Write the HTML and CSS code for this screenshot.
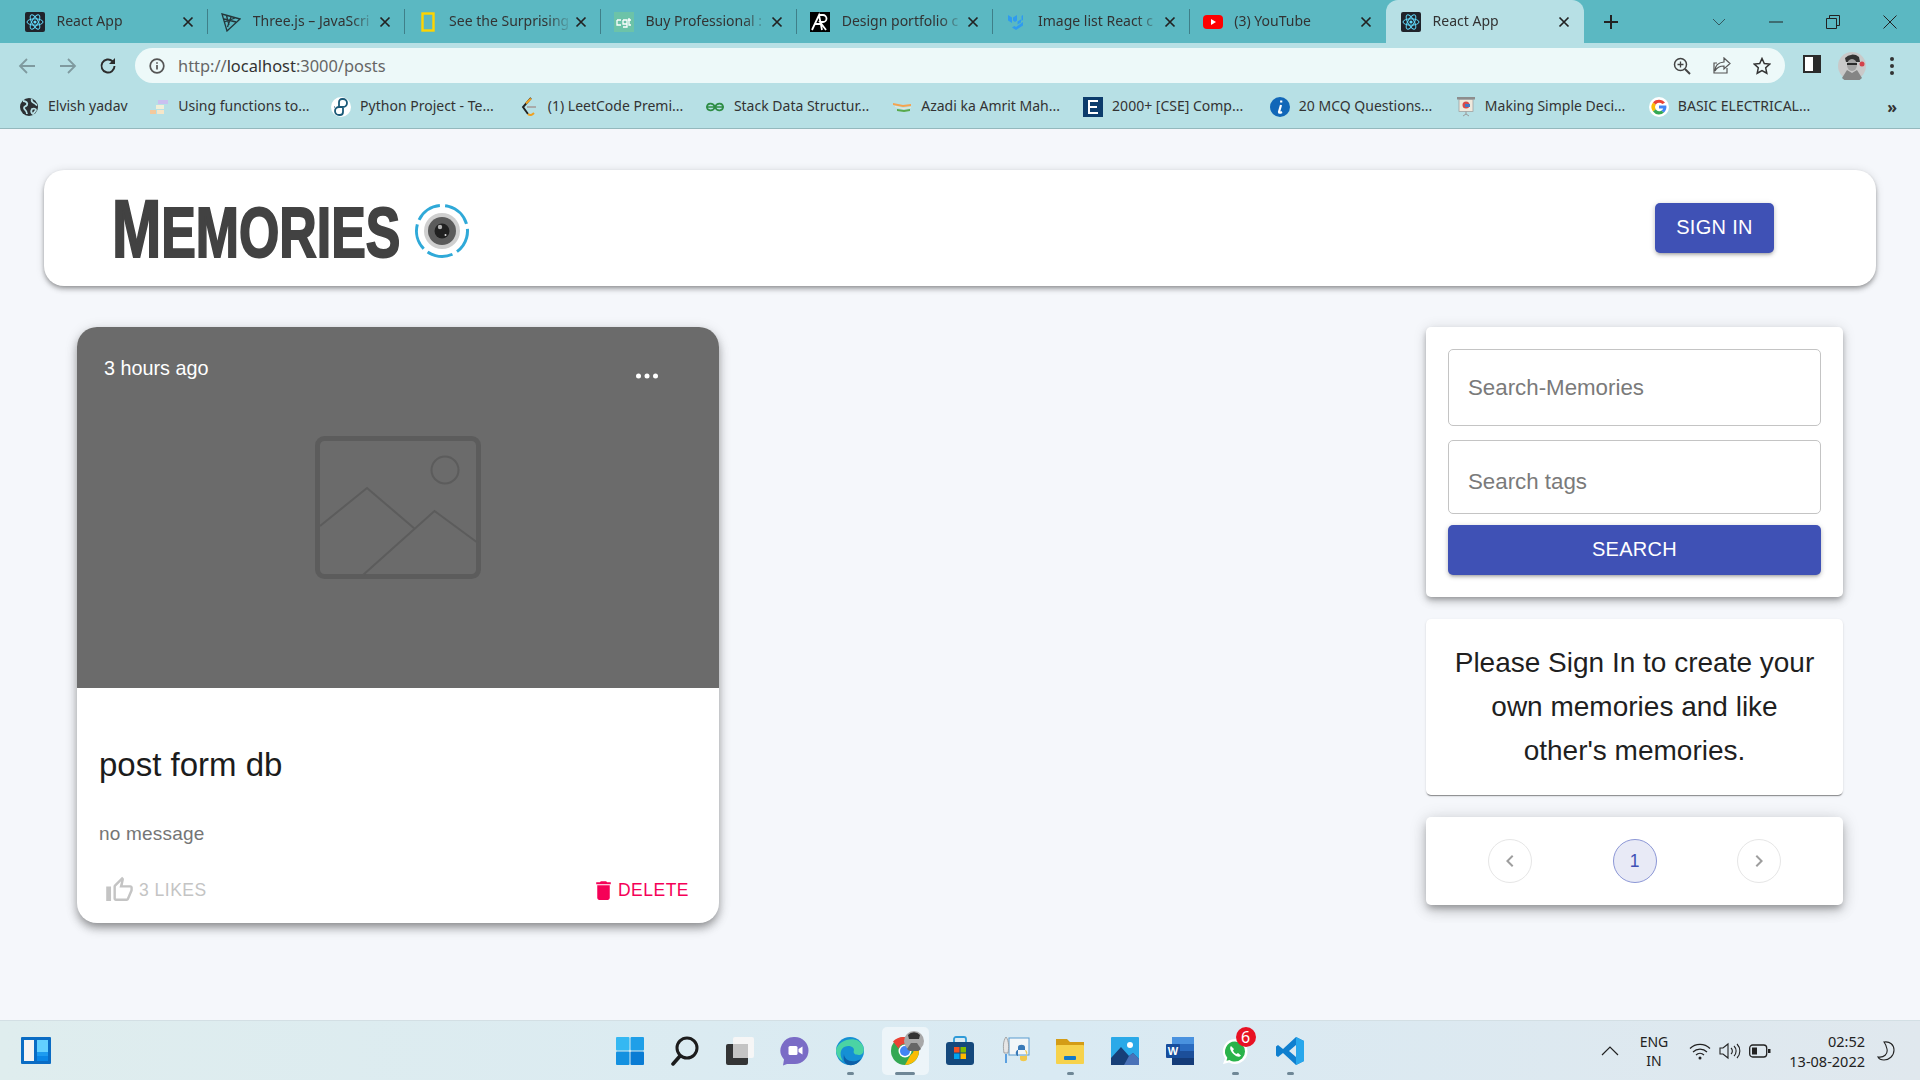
FILE: index.html
```html
<!DOCTYPE html>
<html lang="en">
<head>
    <meta charset="UTF-8">
    <title>React App</title>
    <link rel="stylesheet" href="styles.css">
</head>
<body>
    <svg class="defs" width="0" height="0">
        <symbol id="react" viewBox="0 0 20 20">
            <rect width="20" height="20" rx="2" fill="#20232a"/>
            <g fill="none" stroke="#61dafb" stroke-width="1">
                <ellipse cx="10" cy="10" rx="8" ry="3.2"/>
                <ellipse cx="10" cy="10" rx="8" ry="3.2" transform="rotate(60 10 10)"/>
                <ellipse cx="10" cy="10" rx="8" ry="3.2" transform="rotate(120 10 10)"/>
            </g>
            <circle cx="10" cy="10" r="1.6" fill="#61dafb"/>
        </symbol>
        <symbol id="close" viewBox="0 0 12 12">
            <path d="M1.5 1.5l9 9M10.5 1.5l-9 9" stroke="#222" stroke-width="1.7" fill="none"/>
        </symbol>
    </svg>

    <div class="tabstrip">
        <div class="tab">
            <svg class="favicon"><use href="#react"/></svg>
            <span class="tab-title">React App</span>
            <svg class="tab-close"><use href="#close"/></svg>
        </div>
        <div class="tab">
            <svg class="favicon" viewBox="0 0 20 20"><path d="M1 2l18 5L6 19z M5.500 3.500L8 13 M10 5L6.500 15 M14 6L3.500 10 M3 7l12 3" fill="none" stroke="#24363a" stroke-width="1.300"/></svg>
            <span class="tab-title">Three.js – JavaScri</span>
            <svg class="tab-close"><use href="#close"/></svg>
        </div>
        <div class="tab">
            <svg class="favicon" viewBox="0 0 20 20"><rect x="4.500" y="1.500" width="11" height="17" fill="none" stroke="#ffd400" stroke-width="2.400"/></svg>
            <span class="tab-title">See the Surprising</span>
            <svg class="tab-close"><use href="#close"/></svg>
        </div>
        <div class="tab">
            <svg class="favicon" viewBox="0 0 20 20"><rect width="20" height="20" fill="#6cc3a8"/><path d="M3 8h4M3 8v5h4M9 8h4v7h-4M9 8v4h4M15 6v7h2M14 8h3" fill="none" stroke="#fff" stroke-width="1.300"/></svg>
            <span class="tab-title">Buy Professional :</span>
            <svg class="tab-close"><use href="#close"/></svg>
        </div>
        <div class="tab">
            <svg class="favicon" viewBox="0 0 20 20"><rect width="20" height="20" fill="#000"/><path d="M2 18L9 3l3 15M5 12h6M9 3h4a3.500 3.500 0 0 1 0 7h-3l6 8" fill="none" stroke="#fff" stroke-width="1.800"/></svg>
            <span class="tab-title">Design portfolio c</span>
            <svg class="tab-close"><use href="#close"/></svg>
        </div>
        <div class="tab">
            <svg class="favicon" viewBox="0 0 20 20"><path d="M2 3l4 2.500V11L2 8.500zM7 5.500L11 3v5.500l-2 1.500L7 8.500zM11.500 9.500L15 7.500v3l-3.500 2zM17 3v5l-1.500 1V4zM17 10v3.500L10 18l-4-2.500 2.500-1.500 1.500 1z" fill="#2f9bf0"/></svg>
            <span class="tab-title">Image list React c</span>
            <svg class="tab-close"><use href="#close"/></svg>
        </div>
        <div class="tab tab-last">
            <svg class="favicon" viewBox="0 0 20 20"><rect y="3" width="20" height="14" rx="4" fill="#f00"/><path d="M8 7l5 3-5 3z" fill="#fff"/></svg>
            <span class="tab-title">(3) YouTube</span>
            <svg class="tab-close"><use href="#close"/></svg>
        </div>
        <div class="tab tab-active">
            <svg class="favicon"><use href="#react"/></svg>
            <span class="tab-title">React App</span>
            <svg class="tab-close"><use href="#close"/></svg>
        </div>
        <svg class="new-tab" viewBox="0 0 16 16"><path d="M8 1v14M1 8h14" stroke="#222" stroke-width="2"/></svg>
        <div class="window-controls">
            <span class="win-btn"><svg width="14" height="14" viewBox="0 0 14 14"><path d="M1 4l6 6 6-6" fill="none" stroke="#33595f" stroke-width="1"/></svg></span>
            <span class="win-btn"><svg width="14" height="14" viewBox="0 0 14 14"><path d="M0 7h14" stroke="#222" stroke-width="1"/></svg></span>
            <span class="win-btn"><svg width="14" height="14" viewBox="0 0 14 14"><path d="M.5 3.500h10v10H.5zM3.500 3.500v-3h10v10h-3" fill="none" stroke="#222" stroke-width="1"/></svg></span>
            <span class="win-btn"><svg width="14" height="14" viewBox="0 0 14 14"><path d="M.5.5l13 13M13.500.5l-13 13" stroke="#222" stroke-width="1"/></svg></span>
        </div>
    </div>

    <div class="toolbar">
        <span class="nav-btn"><svg width="18" height="18" viewBox="0 0 18 18"><path d="M17 9H2M9 2L2 9l7 7" fill="none" stroke="#7f9a9f" stroke-width="1.800"/></svg></span>
        <span class="nav-btn"><svg width="18" height="18" viewBox="0 0 18 18"><path d="M1 9h15M9 2l7 7-7 7" fill="none" stroke="#7f9a9f" stroke-width="1.800"/></svg></span>
        <span class="nav-btn"><svg width="18" height="18" viewBox="0 0 18 18"><path d="M15.500 9a6.500 6.500 0 1 1-2-4.700" fill="none" stroke="#2b2b2b" stroke-width="1.900"/><path d="M16 1v6h-6z" fill="#2b2b2b"/></svg></span>
        <div class="omnibox">
            <svg class="omni-info" width="16" height="16" viewBox="0 0 16 16"><circle cx="8" cy="8" r="6.800" fill="none" stroke="#555" stroke-width="1.700"/><path d="M8 7v4.500M8 4.200v1.600" stroke="#555" stroke-width="1.700"/></svg>
            <span class="omni-url">http://<span class="omni-host">localhost</span>:3000/posts</span>
            <svg class="omni-icon" viewBox="0 0 18 18"><circle cx="7.500" cy="7.500" r="6" fill="none" stroke="#444" stroke-width="1.500"/><path d="M12 12l5 5" stroke="#444" stroke-width="2"/><path d="M7.500 4.500v6M4.500 7.500h6" stroke="#444" stroke-width="1.300"/></svg>
            <svg class="omni-icon" viewBox="0 0 18 18"><path d="M11 1l6 5.500-6 5.500V9c-4 0-7 1-9 5 0-5 3-8.500 9-9z M14 11v5H1V6h3" fill="none" stroke="#555" stroke-width="1.200"/></svg>
            <svg class="omni-icon omni-star" viewBox="0 0 18 18"><path d="M9 1.500l2.300 5 5.400.6-4 3.700 1.100 5.400L9 13.500l-4.800 2.700 1.100-5.400-4-3.700 5.400-.6z" fill="none" stroke="#333" stroke-width="1.500"/></svg>
        </div>
        <span class="side-btn"><svg width="18" height="18" viewBox="0 0 18 18"><rect x="1" y="1" width="16" height="16" fill="#fff" stroke="#2b2b2b" stroke-width="2"/><rect x="10" y="1" width="7" height="16" fill="#2b2b2b"/></svg></span>
        <span class="avatar-btn">
            <svg width="28" height="28" viewBox="0 0 28 28">
                <circle cx="14" cy="14" r="14" fill="#c9c9c9"/>
                <path d="M7 6a10 10 0 0 1 14-1l1 5H8z" fill="#333"/>
                <ellipse cx="14" cy="13" rx="5" ry="6" fill="#a3a3a3"/>
                <path d="M9 11h10v2H9z" fill="#2a2a2a"/>
                <path d="M4 26l5-8 5 3 5-3 5 8a14 14 0 0 1-20 0z" fill="#858585"/>
                <circle cx="24" cy="12" r="2.500" fill="#d3424a"/>
            </svg>
        </span>
        <span class="menu-btn"><i></i><i></i><i></i></span>
    </div>

    <div class="bookmarks">
        <span class="bookmark">
            <svg class="bm-icon" viewBox="0 0 20 20"><circle cx="10" cy="10" r="9" fill="#2c3033"/><path d="M4 4c3 0 5 2 4 4s-3 1-3 3 3 2 3 6M13 2c-1 2 0 3 2 4s2 2 3 2M13 12c2-1 4 0 4 1l-3 4c-2-1-2-3-1-5z" fill="none" stroke="#b7e0e5" stroke-width="1.800"/></svg>
            <span class="bm-label">Elvish yadav</span>
        </span>
        <span class="bookmark">
            <svg class="bm-icon" viewBox="0 0 20 20"><rect x="9" y="3" width="10" height="4" fill="#c9c0f0"/><rect x="7" y="8" width="8" height="4" fill="#f1efd8"/><rect x="1" y="13" width="6" height="4" fill="#f4c99c"/><rect x="8" y="13" width="7" height="4" fill="#f6e6c8"/></svg>
            <span class="bm-label">Using functions to...</span>
        </span>
        <span class="bookmark">
            <svg class="bm-icon" viewBox="0 0 20 20"><circle cx="10" cy="10" r="10" fill="#fff"/><path d="M8 10V5a3 3 0 0 1 3-3h1a4 4 0 0 1 0 8H8M4 10h-.5M12 10v5a3 3 0 0 1-3 3H8a4 4 0 0 1 0-8h4" fill="none" stroke="#1c5a78" stroke-width="1.800"/></svg>
            <span class="bm-label">Python Project - Te...</span>
        </span>
        <span class="bookmark">
            <svg class="bm-icon" viewBox="0 0 20 20"><path d="M12 1L4 10l5 7" fill="none" stroke="#222" stroke-width="1.900"/><path d="M9 17c2 2 4 1 6-1" fill="none" stroke="#f0a020" stroke-width="2"/><path d="M8 10h9" stroke="#a8a8a8" stroke-width="1.900"/><path d="M7 6.500l5-5" stroke="#f0a020" stroke-width="2"/></svg>
            <span class="bm-label">(1) LeetCode Premi...</span>
        </span>
        <span class="bookmark">
            <svg class="bm-icon" viewBox="0 0 20 20"><path d="M10 10c-2-5-8-4-8 0s6 5 8 0c2 5 8 4 8 0s-6-5-8 0zM1 10h18" fill="none" stroke="#2f8d46" stroke-width="1.700"/></svg>
            <span class="bm-label">Stack Data Structur...</span>
        </span>
        <span class="bookmark">
            <svg class="bm-icon" viewBox="0 0 20 20"><path d="M1 6l10 2 8-1v2l-8 1-10-2z" fill="#f6a34e"/><path d="M3 9l8 2 8-1v1l-8 1-8-2z" fill="#e8e8d8"/><path d="M5 12l7 1 6-1v2l-6 1-7-1z" fill="#58a94c"/></svg>
            <span class="bm-label">Azadi ka Amrit Mah...</span>
        </span>
        <span class="bookmark">
            <svg class="bm-icon" viewBox="0 0 20 20"><rect width="20" height="20" fill="#0c3c6c"/><path d="M15 4H6v12h9M6 10h8" fill="none" stroke="#fff" stroke-width="2"/></svg>
            <span class="bm-label">2000+ [CSE] Comp...</span>
        </span>
        <span class="bookmark">
            <svg class="bm-icon" viewBox="0 0 20 20"><circle cx="10" cy="10" r="10" fill="#1167b8"/><path d="M11 8l-2 7c0 1 1 1 3 0M11.200 3.500v2" fill="none" stroke="#fff" stroke-width="2.200"/></svg>
            <span class="bm-label">20 MCQ Questions...</span>
        </span>
        <span class="bookmark">
            <svg class="bm-icon" viewBox="0 0 20 20"><rect x="1" y="0" width="18" height="2.500" fill="#8d8d8d"/><rect x="3" y="2.500" width="14" height="12" fill="#efe9dd" stroke="#999" stroke-width=".7"/><circle cx="10" cy="8" r="3.500" fill="#d84a4a"/><rect x="9" y="7" width="5" height="3" fill="#4477c4"/><path d="M10 14.500V17M7 19l3-2 3 2" fill="none" stroke="#999" stroke-width="1"/></svg>
            <span class="bm-label">Making Simple Deci...</span>
        </span>
        <span class="bookmark">
            <svg class="bm-icon" viewBox="0 0 20 20">
                <circle cx="10" cy="10" r="10" fill="#fff"/>
                <path d="M16 5.800A7.500 7.500 0 0 0 4 5.500l2.700 2.200A4.200 4.200 0 0 1 13.300 7z" fill="#ea4335"/>
                <path d="M4 5.500a7.500 7.500 0 0 0 0 9l2.700-2.200a4.200 4.200 0 0 1 0-4.600z" fill="#fbbc05"/>
                <path d="M4 14.500a7.500 7.500 0 0 0 11 1l-2.600-2a4.200 4.200 0 0 1-5.700-1.200z" fill="#34a853"/>
                <path d="M17.300 8.500H10v3h4.200a3.500 3.500 0 0 1-1.800 2l2.600 2c2-1.800 2.800-4.200 2.300-7z" fill="#4285f4"/>
            </svg>
            <span class="bm-label">BASIC ELECTRICAL...</span>
        </span>
        <span class="bookmark-more">»</span>
    </div>

    <main class="page">
        <header class="appbar">
            <div class="brand">
                <span class="brand-text"><span class="brand-big">M</span>EMORIES</span>
                <svg class="brand-icon" width="56" height="56" viewBox="0 0 56 56">
                    <circle cx="28" cy="28" r="25.500" fill="none" stroke="#2fa9d8" stroke-width="3" stroke-dasharray="26 5.100" transform="rotate(-75 28 28)"/>
                    <circle cx="28" cy="28" r="18" fill="#cfcfcf"/>
                    <circle cx="28" cy="28" r="14" fill="#5b5b5b"/>
                    <circle cx="28" cy="28" r="7.500" fill="#202020"/>
                    <circle cx="26" cy="24" r="2.200" fill="#b5b5b5"/>
                    <circle cx="31.500" cy="32" r="1" fill="#e4e4e4"/>
                </svg>
            </div>
            <button class="signin-btn">SIGN IN</button>
        </header>

        <div class="content">
            <article class="post-card">
                <div class="post-media">
                    <span class="post-time">3 hours ago</span>
                    <svg class="post-more" width="24" height="6" viewBox="0 0 24 6"><circle cx="3.500" cy="3" r="2.500" fill="#fff"/><circle cx="12" cy="3" r="2.500" fill="#fff"/><circle cx="20.500" cy="3" r="2.500" fill="#fff"/></svg>
                    <svg width="166" height="143" viewBox="0 0 166 143">
                        <g fill="none" stroke="#5c5c5c">
                            <rect x="2.500" y="2.500" width="161" height="138" rx="7" stroke-width="5"/>
                            <circle cx="130" cy="34" r="13.500" stroke-width="2"/>
                            <path d="M5 90L52 52l48 41M48 139l71.500-64L163 107" stroke-width="2"/>
                        </g>
                    </svg>
                </div>
                <div class="post-body">
                    <h2 class="post-title">post form db</h2>
                    <p class="post-message">no message</p>
                    <div class="post-actions">
                        <span class="like-btn">
                            <svg width="30" height="30" viewBox="0 0 24 24"><path d="M9 21h9c.83 0 1.54-.5 1.84-1.22l3.02-7.05c.09-.23.14-.47.14-.73v-2c0-1.100-.9-2-2-2h-6.310l.95-4.570.03-.32c0-.41-.17-.79-.44-1.060L14.170 1 7.580 7.590C7.220 7.950 7 8.450 7 9v10c0 1.100.9 2 2 2zM9 9l4.340-4.340L12 10h9v2l-3 7H9V9zM1 9h4v12H1z" fill="#c4c4c4"/></svg>
                            3 LIKES
                        </span>
                        <span class="delete-btn">
                            <svg width="25" height="25" viewBox="0 0 24 24"><path d="M6 19c0 1.100.9 2 2 2h8c1.100 0 2-.9 2-2V7H6v12zM19 4h-3.500l-1-1h-5l-1 1H5v2h14V4z" fill="#f50057"/></svg>
                            DELETE
                        </span>
                    </div>
                </div>
            </article>

            <aside class="sidebar">
                <form class="search-card">
                    <input class="search-input search-input-first" type="text" placeholder="Search-Memories">
                    <input class="search-input search-input-tags" type="text" placeholder="Search tags">
                    <button class="search-btn" type="button">SEARCH</button>
                </form>
                <div class="info-card">Please Sign In to create your own memories and like other's memories.</div>
                <div class="pager-card">
                    <span class="page-btn"><svg width="24" height="24" viewBox="0 0 24 24"><path d="M15.410 7.410L14 6l-6 6 6 6 1.410-1.410L10.830 12z" fill="#9e9e9e"/></svg></span>
                    <span class="page-btn page-current">1</span>
                    <span class="page-btn"><svg width="24" height="24" viewBox="0 0 24 24"><path d="M10 6L8.590 7.410 13.170 12l-4.580 4.590L10 18l6-6z" fill="#9e9e9e"/></svg></span>
                </div>
            </aside>
        </div>
    </main>

    <footer class="taskbar">
        <div class="task-left">
            <svg width="30" height="27" viewBox="0 0 30 27"><rect width="30" height="27" rx="1" fill="#0a6cc4"/><rect x="3" y="3" width="10" height="21" fill="#f4f4f4"/><rect x="16" y="3" width="11" height="12" fill="#63d0ff"/><rect x="16" y="15" width="11" height="4" fill="#1d9bf0"/><rect x="16" y="19" width="11" height="5" fill="#0a86e6"/></svg>
        </div>
        <div class="task-icons">
            <span class="task-icon"><svg width="30" height="30" viewBox="0 0 30 30"><rect x="1" y="1" width="13.500" height="13.500" rx="1" fill="#35b8f2"/><rect x="15.500" y="1" width="13.500" height="13.500" rx="1" fill="#1f9fe8"/><rect x="1" y="15.500" width="13.500" height="13.500" rx="1" fill="#1491e0"/><rect x="15.500" y="15.500" width="13.500" height="13.500" rx="1" fill="#0a7cd4"/></svg></span>
            <span class="task-icon"><svg width="30" height="30" viewBox="0 0 30 30"><circle cx="17" cy="12" r="10" fill="none" stroke="#1c1c1c" stroke-width="3"/><path d="M10 20l-7 8" stroke="#1c1c1c" stroke-width="3.500" stroke-linecap="round"/></svg></span>
            <span class="task-icon"><svg width="30" height="30" viewBox="0 0 30 30"><rect x="8" y="1" width="21" height="21" rx="2" fill="#f6f6f6"/><rect x="1" y="8" width="22" height="21" rx="2" fill="#2a2a2a" opacity=".95"/><rect x="8" y="8" width="15" height="14" fill="#c4c4c4"/></svg></span>
            <span class="task-icon"><svg width="30" height="30" viewBox="0 0 30 30"><path d="M15 1a13.500 13.500 0 0 1 0 27H7l-4 1.500 1-6A13.500 13.500 0 0 1 15 1z" fill="#7a6cc6"/><rect x="8.500" y="10" width="9" height="9" rx="1.500" fill="#fff"/><path d="M18.500 13l4-2.500v8l-4-2.500z" fill="#fff"/></svg></span>
            <span class="task-icon task-open"><svg width="30" height="30" viewBox="0 0 30 30"><circle cx="15" cy="15" r="14" fill="#1590d4"/><path d="M1 14C3 4 22-2 28 10c2 5 0 9-4 9-5 0-6-2-5-5 0-4-8-6-12-1-2 3-2 8 1 12-4-2-7-6-7-11z" fill="#4bd3a4"/><path d="M9 18c0 6 8 10 17 5-3 5-8 7-12 6-5-1-6-6-5-11z" fill="#0c5fa8"/></svg></span>
            <span class="task-icon task-open task-active">
                <svg width="30" height="30" viewBox="0 0 30 30"><circle cx="15" cy="15" r="14" fill="#34a853"/><path d="M15 1a14 14 0 0 1 12.100 7H15a7 7 0 0 0-6.500 4.400L3 5.500A14 14 0 0 1 15 1z" fill="#ea4335"/><path d="M27.100 8A14 14 0 0 1 15 29l5.600-10A7 7 0 0 0 22 8z" fill="#fbbc05"/><circle cx="15" cy="15" r="6.500" fill="#fff"/><circle cx="15" cy="15" r="5" fill="#4285f4"/></svg>
                <svg class="chrome-avatar" width="20" height="20" viewBox="0 0 20 20"><circle cx="10" cy="10" r="10" fill="#a8a8a8"/><path d="M4 4a8 8 0 0 1 12 0l-1 4H5z" fill="#333"/><path d="M3 18l4-6h6l4 6a10 10 0 0 1-14 0z" fill="#666"/></svg>
            </span>
            <span class="task-icon"><svg width="30" height="30" viewBox="0 0 30 30"><path d="M9 6V3a2 2 0 0 1 2-2h8a2 2 0 0 1 2 2v3" fill="none" stroke="#2f9bd8" stroke-width="1.800"/><rect x="1" y="6" width="28" height="23" rx="3" fill="#14487c"/><rect x="9" y="11" width="5.500" height="5.500" fill="#f25022"/><rect x="15.500" y="11" width="5.500" height="5.500" fill="#7fba00"/><rect x="9" y="17.500" width="5.500" height="5.500" fill="#00a4ef"/><rect x="15.500" y="17.500" width="5.500" height="5.500" fill="#ffb900"/></svg></span>
            <span class="task-icon"><svg width="30" height="30" viewBox="0 0 30 30"><rect x="9" y="2" width="20" height="17" fill="#f2f6f8" stroke="#5a9bd0" stroke-width="1"/><path d="M6 1c3 4 3 10 2 16H4C3 11 3 5 6 1z" fill="#e6e6e6" stroke="#888" stroke-width=".7"/><path d="M6 18v9" stroke="#5ba0e0" stroke-width="2"/><path d="M18 11c0-3 7-3 7 0v3h-7c-3 0-3 6 0 6v-1" fill="#3a7ab8"/><path d="M25 14c3 0 3 6 0 6h-5v3c0 3 7 3 7 0v-3" fill="#f2c94c"/></svg></span>
            <span class="task-icon task-open"><svg width="30" height="30" viewBox="0 0 30 30"><path d="M1 3h11l3 3h14v4H1z" fill="#d49c16"/><rect x="1" y="9" width="28" height="19" rx="1" fill="#f6d24c"/><rect x="9" y="20" width="12" height="4" rx="1" fill="#1278c8"/></svg></span>
            <span class="task-icon"><svg width="30" height="30" viewBox="0 0 30 30"><rect x="1" y="1" width="28" height="28" rx="1" fill="#2aa9e8"/><circle cx="20" cy="9" r="3" fill="#fff"/><path d="M1 29V22L11 11l8 9 4-3 6 6v6z" fill="#173f78"/><path d="M19 20l4-3 6 6v6H14z" fill="#4a72b8"/></svg></span>
            <span class="task-icon"><svg width="30" height="30" viewBox="0 0 30 30"><rect x="7" y="1" width="22" height="28" rx="1" fill="#2a6bc0"/><rect x="7" y="1" width="22" height="7" fill="#4a92df"/><rect x="7" y="15" width="22" height="7" fill="#1c4f9a"/><rect x="7" y="22" width="22" height="7" fill="#143b78"/><rect x="1" y="8" width="14" height="14" rx="1" fill="#174d9c"/><text class="word-w" x="8" y="19" text-anchor="middle">W</text></svg></span>
            <span class="task-icon task-open">
                <svg width="30" height="30" viewBox="0 0 30 30"><path d="M15 3a12.500 12.500 0 0 1 0 25c-2 0-4-.5-6-1.500L3 28l2-5.500A12.500 12.500 0 0 1 15 3z" fill="#fff"/><path d="M15 5.500a10 10 0 0 1 0 20c-2 0-4-.5-5.500-1.500l-3 .8.8-3A10 10 0 0 1 15 5.500z" fill="#29b34a"/><path d="M11 10c-2 2 0 6 3 8.500s5.500 3 7 1l-3-2.500-1.500 1c-1.500-.5-3-2-3.500-3.500l1-1.500z" fill="#fff"/></svg>
                <span class="task-badge">6</span>
            </span>
            <span class="task-icon task-open"><svg width="30" height="30" viewBox="0 0 30 30"><path d="M21 1l8 4v20l-8 4L8 17l-5 4-2-1.500V10.500L3 9l5 4zM21 9l-7 6 7 6z" fill="#0f7fcf"/><path d="M21 1l8 4v20l-8 4z" fill="#28a7ec"/></svg></span>
        </div>
        <div class="task-tray">
            <svg class="tray-chevron" width="18" height="10" viewBox="0 0 18 10"><path d="M1 9l8-8 8 8" fill="none" stroke="#222" stroke-width="1.200"/></svg>
            <span class="tray-lang">ENG<br>IN</span>
            <svg class="tray-icon" width="22" height="18" viewBox="0 0 22 18"><path d="M1 6.500a14 14 0 0 1 20 0M4 10a10 10 0 0 1 14 0M7 13a6 6 0 0 1 8 0" fill="none" stroke="#222" stroke-width="1.200"/><circle cx="11" cy="16" r="1.500" fill="#222"/></svg>
            <svg class="tray-icon" width="22" height="18" viewBox="0 0 22 18"><path d="M1 6h3l5-4v14l-5-4H1z" fill="none" stroke="#222" stroke-width="1.100"/><path d="M12 6a4 4 0 0 1 0 6M15 4a7 7 0 0 1 0 10M18 2a10 10 0 0 1 0 14" fill="none" stroke="#222" stroke-width="1.100"/></svg>
            <svg class="tray-icon" width="22" height="14" viewBox="0 0 22 14"><rect x=".7" y="1" width="17" height="12" rx="3" fill="none" stroke="#222" stroke-width="1.300"/><rect x="3" y="3.500" width="5" height="7" fill="#222"/><rect x="19" y="5" width="2.500" height="4" fill="#222"/></svg>
            <span class="tray-clock">02:52<br>13-08-2022</span>
            <svg class="tray-moon" width="18" height="20" viewBox="0 0 18 20"><path d="M7 1c6-1 10 3 10 8 0 6-5 10-10 10-3 0-5-1-6-3 6 1 10-3 9-8C9.500 5 8.500 3 7 1z" fill="none" stroke="#222" stroke-width="1.100"/></svg>
        </div>
    </footer>
</body>
</html>
```

FILE: styles.css
```css
* {
    box-sizing: border-box;
}

body {
    margin: 0;
    height: 1080px;
    display: flex;
    flex-direction: column;
    overflow: hidden;
    font-family: "Liberation Sans", Arial, sans-serif;
    background-color: #f5f7fb;
}

.defs {
    position: absolute;
}

/* browser chrome */
.tabstrip {
    height: 43px;
    flex: none;
    display: flex;
    align-items: center;
    padding-left: 12px;
    background-color: #5bb8c2;
    font-family: "Noto Sans", sans-serif;
    font-size: 14px;
    color: #333;
}

.tab {
    position: relative;
    width: 196.300px;
    height: 43px;
    flex: none;
    display: flex;
    align-items: center;
    padding: 0 12px 0 13px;
}

.tab::after {
    content: "";
    position: absolute;
    right: 0;
    top: 9px;
    height: 25px;
    width: 1px;
    background-color: #3f7f89;
}

.tab-last::after {
    display: none;
}

.favicon {
    width: 20px;
    height: 20px;
    flex: none;
    margin-right: 11.500px;
}

.tab-title {
    flex: 1;
    min-width: 0;
    margin: -2px 1px 0 0;
    white-space: nowrap;
    -webkit-mask-image: linear-gradient(to right, #000 80%, transparent);
    mask-image: linear-gradient(to right, #000 80%, transparent);
}

.tab-close {
    width: 12px;
    height: 12px;
    flex: none;
    margin: 0 2px;
}

.tab-active {
    width: 198px;
    padding-left: 15px;
    background-color: #b7e0e5;
    border-radius: 12px 12px 0 0;
}

.tab-active::after {
    display: none;
}

.new-tab {
    width: 16px;
    height: 16px;
    margin-left: 19px;
}

.window-controls {
    display: flex;
    margin-left: auto;
    padding-right: 2px;
}

.win-btn {
    width: 57px;
    display: flex;
    justify-content: center;
}

.toolbar {
    height: 43px;
    flex: none;
    display: flex;
    align-items: center;
    padding: 5px 0 3px 7px;
    background-color: #b7e0e5;
}

.nav-btn {
    width: 40.5px;
    display: flex;
    justify-content: center;
}

.omnibox {
    width: 1650px;
    height: 35px;
    margin-left: 6.5px;
    display: flex;
    align-items: center;
    padding: 0 14px 0 14px;
    background-color: #edf9f9;
    border-radius: 18px;
}

.omni-info {
    margin-right: 13px;
}

.omni-url {
    flex: 1;
    margin-top: -1px;
    font-family: "Noto Sans", sans-serif;
    font-size: 16.400px;
    color: #666;
}

.omni-host {
    color: #333;
}

.omni-icon {
    width: 18px;
    height: 18px;
    margin-right: 22px;
}

.omni-star {
    margin-right: 0;
}

.side-btn {
    width: 18px;
    margin-left: 18px;
}

.avatar-btn {
    width: 28px;
    height: 28px;
    margin-left: 17px;
}

.menu-btn {
    width: 4px;
    margin-left: 24px;
    display: flex;
    flex-direction: column;
    gap: 3px;
}

.menu-btn i {
    width: 4px;
    height: 4px;
    border-radius: 50%;
    background-color: #333;
}

.bookmarks {
    height: 43px;
    flex: none;
    display: flex;
    align-items: center;
    gap: 21.600px;
    padding: 0 0 1px 19px;
    background-color: #b7e0e5;
    border-bottom: 1px solid #94b8bd;
    font-family: "Noto Sans", sans-serif;
    font-size: 14px;
    color: #333;
    white-space: nowrap;
}

.bookmark {
    display: flex;
    align-items: center;
    gap: 9px;
}

/* the real labels are not the same width here, nudge them back in line */
.bookmark:nth-child(4) {
    margin-left: 3.500px;
}

.bookmark:nth-child(6) {
    margin-left: 1.300px;
}

.bookmark:nth-child(7) {
    margin-left: 1.500px;
}

.bookmark:nth-child(8) {
    margin-left: 5px;
}

.bookmark:nth-child(9) {
    margin-left: 2px;
}

.bookmark:nth-child(10) {
    margin-left: 2px;
}

.bm-label {
    margin-top: -3px;
}

.bm-icon {
    width: 20px;
    height: 20px;
    flex: none;
}

.bookmark-more {
    margin-left: auto;
    margin-right: 23px;
    font-size: 16px;
    font-weight: 700;
}

/* the app */
.page {
    flex: 1;
    padding: 41px 44px 0;
}

.appbar {
    height: 116px;
    display: flex;
    align-items: center;
    justify-content: space-between;
    padding: 0 102px 0 71px;
    background-color: #fff;
    border-radius: 20px;
    box-shadow: 0 2px 4px -1px rgba(0, 0, 0, 0.3), 0 4px 5px rgba(0, 0, 0, 0.14), 0 1px 10px rgba(0, 0, 0, 0.12);
}

.brand {
    display: flex;
    align-items: center;
    margin-top: 5px;
}

.brand-text {
    display: inline-block;
    width: 287px;
    margin-left: -3px;
    font-size: 71px;
    line-height: 70px;
    font-weight: 700;
    color: #424242;
    white-space: nowrap;
    -webkit-text-stroke: 2px #424242;
    transform: scaleX(0.73);
    transform-origin: left center;
}

.brand-big {
    font-size: 81px;
}

.brand-icon {
    margin-left: 15px;
}

.signin-btn {
    width: 119px;
    height: 50px;
    padding-bottom: 2px;
    border: none;
    border-radius: 5px;
    background-color: #3f51b5;
    color: #fff;
    font-family: inherit;
    font-size: 20px;
    letter-spacing: 0.3px;
    box-shadow: 0 3px 3px -2px rgba(0, 0, 0, 0.2), 0 2px 4px rgba(0, 0, 0, 0.14), 0 1px 6px rgba(0, 0, 0, 0.12);
}

.content {
    display: flex;
    justify-content: space-between;
    align-items: flex-start;
    margin-top: 41px;
    padding: 0 33px;
}

.post-card {
    width: 642px;
    height: 596px;
    background-color: #fff;
    border-radius: 20px;
    overflow: hidden;
    box-shadow: 0 5px 8px -2px rgba(0, 0, 0, 0.3), 0 6px 12px rgba(0, 0, 0, 0.14), 0 2px 14px rgba(0, 0, 0, 0.12);
}

.post-media {
    position: relative;
    height: 361px;
    display: flex;
    align-items: center;
    justify-content: center;
    background-color: #6b6b6b;
}

.post-time {
    position: absolute;
    left: 27px;
    top: 30px;
    font-size: 19.800px;
    line-height: 22px;
    color: #fff;
}

.post-more {
    position: absolute;
    left: 558px;
    top: 46px;
}

.post-body {
    padding: 52px 30px 0 22px;
}

.post-title {
    margin: 0;
    font-size: 33px;
    line-height: 50px;
    font-weight: 400;
    color: #1c1c1c;
}

.post-message {
    margin: 32px 0 0;
    font-size: 19px;
    line-height: 24px;
    letter-spacing: 0.2px;
    color: #757575;
}

.post-actions {
    display: flex;
    justify-content: space-between;
    align-items: center;
    height: 30px;
    margin-top: 29px;
    padding-left: 7px;
    font-size: 17.500px;
    letter-spacing: 0.5px;
}

.like-btn,
.delete-btn {
    display: flex;
    align-items: center;
}

.like-btn {
    gap: 3px;
    color: #c4c4c4;
}

.like-btn svg {
    width: 29px;
    margin-left: -1px;
    margin-right: 2px;
}

.delete-btn {
    gap: 2px;
    color: #f50057;
}

.sidebar {
    width: 417px;
    display: flex;
    flex-direction: column;
}

.search-card {
    display: flex;
    flex-direction: column;
    padding: 22px;
    background-color: #fff;
    border-radius: 5px;
    box-shadow: 0 3px 5px -1px rgba(0, 0, 0, 0.25), 0 5px 8px rgba(0, 0, 0, 0.14), 0 1px 14px rgba(0, 0, 0, 0.12);
}

.search-input {
    width: 100%;
    border: 1px solid #c4c4c4;
    border-radius: 5px;
    padding: 0 19px;
    font-family: inherit;
    font-size: 22.300px;
    background-color: #fff;
}

.search-input::placeholder {
    color: #7a7a7a;
}

.search-input-first {
    height: 77px;
}

.search-input-tags {
    height: 74px;
    margin-top: 14px;
    padding-top: 9px;
}

.search-btn {
    height: 50px;
    margin-top: 11px;
    padding-bottom: 2px;
    border: none;
    border-radius: 5px;
    background-color: #3f51b5;
    color: #fff;
    font-family: inherit;
    font-size: 20px;
    letter-spacing: 0.3px;
    box-shadow: 0 3px 3px -2px rgba(0, 0, 0, 0.2), 0 2px 4px rgba(0, 0, 0, 0.14), 0 1px 6px rgba(0, 0, 0, 0.12);
}

.info-card {
    height: 176px;
    margin-top: 22px;
    padding: 22px 20px;
    background-color: #fff;
    border-radius: 5px;
    text-align: center;
    font-size: 28px;
    line-height: 44px;
    color: #1f1f1f;
    box-shadow: 0 2px 1px -1px rgba(0, 0, 0, 0.3), 0 1px 1px rgba(0, 0, 0, 0.14), 0 1px 3px rgba(0, 0, 0, 0.1);
}

.pager-card {
    height: 88px;
    margin-top: 22px;
    display: flex;
    align-items: center;
    justify-content: space-between;
    padding: 0 62px;
    background-color: #fff;
    border-radius: 5px;
    box-shadow: 0 5px 6px -2px rgba(0, 0, 0, 0.25), 0 6px 14px rgba(0, 0, 0, 0.14), 0 2px 18px rgba(0, 0, 0, 0.14);
}

.page-btn {
    width: 44px;
    height: 44px;
    display: flex;
    align-items: center;
    justify-content: center;
    border: 1px solid #e6e6e6;
    border-radius: 50%;
}

.page-current {
    background-color: #e8eaf6;
    border-color: #8c97d6;
    color: #3f51b5;
    font-size: 17.500px;
}

/* windows taskbar */
.taskbar {
    height: 60px;
    flex: none;
    display: grid;
    grid-template-columns: 1fr auto 1fr;
    align-items: center;
    background: linear-gradient(to right, #dfedee, #d9eaf3 55%, #e0e8ee);
    border-top: 1px solid #d3dfe4;
    font-family: "Noto Sans", sans-serif;
    color: #222;
}

.task-left {
    display: flex;
    padding-left: 21px;
}

.task-icons {
    display: flex;
}

.task-icon {
    position: relative;
    width: 55px;
    height: 48px;
    display: flex;
    align-items: center;
    justify-content: center;
}

.task-open::after {
    content: "";
    position: absolute;
    left: 24px;
    bottom: 0;
    width: 7px;
    height: 3px;
    border-radius: 2px;
    background-color: #6f8796;
}

.task-active::before {
    content: "";
    position: absolute;
    left: 4px;
    right: 4px;
    top: 0;
    bottom: 0;
    background-color: rgba(255, 255, 255, 0.5);
    border-radius: 5px;
    z-index: 0;
}

.task-active svg {
    position: relative;
}

.task-active::after {
    left: 17px;
    width: 20px;
}

.chrome-avatar {
    position: absolute !important;
    right: 9px;
    top: 4px;
}

.word-w {
    font-family: "Liberation Sans", sans-serif;
    font-size: 11px;
    font-weight: 700;
    fill: #fff;
}

.task-badge {
    position: absolute;
    right: 7px;
    top: 0;
    width: 20px;
    height: 20px;
    border-radius: 50%;
    background-color: #e81123;
    color: #fff;
    font-size: 16px;
    line-height: 20px;
    text-align: center;
}

.task-tray {
    display: flex;
    align-items: center;
    justify-content: flex-end;
}

.tray-chevron {
    margin-right: 15px;
}

.tray-lang {
    width: 40px;
    margin-right: 15px;
    text-align: center;
    font-size: 14px;
    line-height: 19px;
}

.tray-icon {
    margin-right: 8px;
}

.tray-clock {
    width: 90px;
    margin-left: -4px;
    text-align: right;
    font-size: 14.500px;
    line-height: 20px;
}

.tray-moon {
    margin: 0 25px 0 12px;
}
```
